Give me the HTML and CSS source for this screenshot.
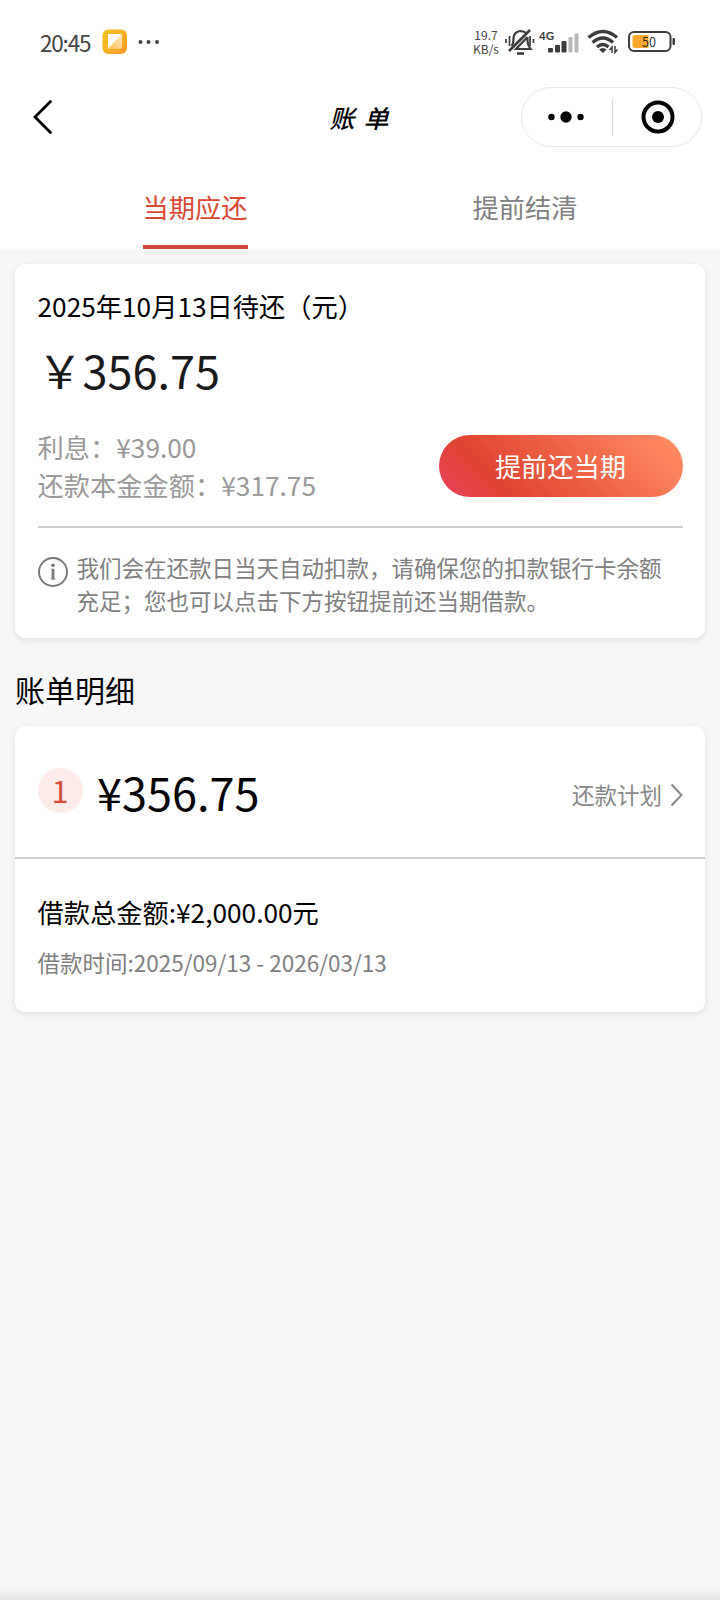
FILE: index.html
```html
<!DOCTYPE html>
<html lang="zh-CN">
  <head>
    <meta charset="utf-8">
    <title>账单</title>
    <link rel="stylesheet" href="styles.css">
  </head>
  <body>
    <div class="status">
      <span class="time">20:45</span>
      <svg class="app" width="26" height="26" viewBox="0 0 26 26">
        <defs>
          <linearGradient id="gold" x1="0" y1="0" x2="1" y2="1">
            <stop offset="0" stop-color="#f3c51c"/>
            <stop offset="1" stop-color="#ff9a2b"/>
          </linearGradient>
          <linearGradient id="fold" x1="1" y1="0" x2="0" y2="1">
            <stop offset="0" stop-color="#fff"/>
            <stop offset="1" stop-color="#ffc45c"/>
          </linearGradient>
        </defs>
        <rect x="0.5" y="0.5" width="24.5" height="24.5" rx="6" fill="url(#gold)"/>
        <path d="M6 5H20L6 20Z" fill="#fff"/>
        <path d="M20 5V17Q20 20 17 20H6Z" fill="url(#fold)" opacity="0.75"/>
      </svg>
      <svg class="more" width="22" height="6" viewBox="0 0 22 6" fill="#444">
        <circle cx="2.5" cy="3" r="2"/>
        <circle cx="10.5" cy="3" r="2"/>
        <circle cx="19" cy="3" r="2"/>
      </svg>
      <div class="speed">19.7<br>KB/s</div>
      <svg class="mute" width="32" height="28" viewBox="0 0 32 28" fill="none" stroke="#3c3c3c" stroke-width="2.2">
        <path d="M2 11V15M5.5 8V18M26 8V18M29.5 11V15" stroke-width="1.7"/>
        <path d="M5 23L26 2" stroke-width="2.6"/>
        <path d="M7.5 18Q9.500 16 9.500 10Q10 4 16 3Q20 3 22 5"/>
        <path d="M23.500 9V13Q23.500 17 26.500 21H12L23.500 9"/>
        <path d="M13 25.500H20" stroke-width="2.6"/>
      </svg>
      <svg class="signal" width="42" height="26" viewBox="0 0 42 26">
        <text class="net" x="0" y="11" textLength="15" lengthAdjust="spacingAndGlyphs">4G</text>
        <g fill="#3c3c3c">
          <rect x="9" y="19" width="5" height="4.500" rx="1"/>
          <rect x="16" y="16" width="5" height="7.500" rx="1"/>
          <rect x="22.500" y="12" width="5" height="11.500" rx="1"/>
        </g>
        <g fill="#b9b9b9">
          <rect x="29.500" y="8" width="4" height="15.500" rx="1"/>
          <rect x="35.500" y="4.500" width="4" height="19" rx="1"/>
        </g>
      </svg>
      <svg class="wifi" width="32" height="26" viewBox="0 0 32 26" fill="none" stroke="#3c3c3c" stroke-width="3.300">
        <path d="M1.500 8.500Q16 -3.500 30 8.500"/>
        <path d="M5.500 13.500Q16 4.500 26 13.500"/>
        <path d="M10 18Q16 13 21.500 18"/>
        <path d="M12 20.500Q16 17.500 19.500 20.500L16 24Z" fill="#3c3c3c" stroke="none"/>
        <path d="M25 24V18L22.500 21M28 17V23.500L30.500 20.500" stroke-width="1.500"/>
      </svg>
      <svg class="battery" width="48" height="22" viewBox="0 0 48 22">
        <rect x="1" y="1" width="41.500" height="19" rx="5" fill="#fff" stroke="#3c3c3c" stroke-width="2"/>
        <path d="M7 4H20.500V17H7Q4.500 17 4.500 14.500V6.500Q4.500 4 7 4Z" fill="#faa92e"/>
        <rect x="44.500" y="7" width="2.500" height="7" rx="1" fill="#3c3c3c"/>
        <text class="level" x="14" y="15.500" textLength="14" lengthAdjust="spacingAndGlyphs">50</text>
      </svg>
    </div>

    <div class="nav">
      <svg class="back" width="20" height="36" viewBox="0 0 20 36">
        <path d="M17.500 2.500L2 18L17.500 33.500" fill="none" stroke="#000" stroke-width="2.800" stroke-linecap="round"/>
      </svg>
      <h1>账单</h1>
      <div class="capsule">
        <svg width="36" height="12" viewBox="0 0 36 12">
          <circle cx="3.500" cy="6" r="3.200"/>
          <circle cx="18" cy="6" r="5.700"/>
          <circle cx="32.500" cy="6" r="3.200"/>
        </svg>
        <i></i>
        <svg width="34" height="34" viewBox="0 0 34 34">
          <circle cx="17" cy="17" r="14.500" fill="none" stroke="#000" stroke-width="4"/>
          <circle cx="17" cy="17" r="6"/>
        </svg>
      </div>
    </div>

    <div class="tabs">
      <div class="tab"><span class="active">当期应还</span></div>
      <div class="tab"><span>提前结清</span></div>
    </div>

    <div class="card due">
      <div class="date">2025年10月13日待还（元）</div>
      <div class="amount">￥356.75</div>
      <div class="row">
        <div class="parts">
          <div>利息：¥39.00</div>
          <div>还款本金金额：¥317.75</div>
        </div>
        <div class="btn">提前还当期</div>
      </div>
      <div class="note">
        <svg width="30" height="30" viewBox="0 0 30 30">
          <circle cx="15" cy="15" r="14" fill="none" stroke="#777" stroke-width="1.900"/>
          <circle cx="15" cy="8.300" r="1.800" fill="#777"/>
          <path d="M12.800 12H15.500V22M12.500 22H18" fill="none" stroke="#777" stroke-width="0.600"/>
          <path d="M15 12V22.500" stroke="#777" stroke-width="2.800"/>
        </svg>
        <p>我们会在还款日当天自动扣款，请确保您的扣款银行卡余额<br>充足；您也可以点击下方按钮提前还当期借款。</p>
      </div>
    </div>

    <h2>账单明细</h2>

    <div class="card bill">
      <div class="head">
        <span class="num">1</span>
        <span class="sum">¥356.75</span>
        <span class="plan">还款计划</span>
        <svg width="13" height="24" viewBox="0 0 13 24">
          <path d="M1.500 1.500L11.500 12L1.500 22.500" fill="none" stroke="#888" stroke-width="2"/>
        </svg>
      </div>
      <div class="info">
        <div class="total">借款总金额:¥2,000.00元</div>
        <div class="period">借款时间:2025/09/13 - 2026/03/13</div>
      </div>
    </div>

    <div class="bottom"></div>
  </body>
</html>
```

FILE: styles.css
```css
* {
  box-sizing: border-box;
}

body {
  margin: 0;
  height: 1600px;
  display: flex;
  flex-direction: column;
  overflow: hidden;
  background: #f7f7f7;
  color: #000;
  font-family: "Noto Sans CJK SC", sans-serif;
  font-size: 26.25px;
  line-height: 38px;
}

svg {
  display: block;
  flex: none;
}

.status {
  height: 84px;
  padding: 0 44px 0 40px;
  display: flex;
  align-items: center;
  background: #fff;
}

.time {
  width: 62px;
  color: #444;
  font-family: "Noto Sans CJK SC", sans-serif;
  font-size: 22.5px;
  letter-spacing: -1.2px;
}

.more {
  margin-left: 10px;
}

.speed {
  width: 26px;
  margin-left: auto;
  color: #444;
  font-family: "Noto Sans CJK SC", sans-serif;
  font-size: 12px;
  line-height: 14px;
  text-align: center;
  white-space: nowrap;
}

.mute {
  margin-left: 5px;
}

.signal {
  margin-left: 3px;
}

.wifi {
  margin-left: 6px;
}

.battery {
  margin-left: 9px;
}

.net {
  fill: #3c3c3c;
  font: bold 11px Lato, sans-serif;
}

.level {
  fill: #333;
  font: 13.5px "Noto Sans CJK SC", sans-serif;
}

.nav {
  height: 66px;
  padding: 0 18px 0 33px;
  display: grid;
  grid-template-columns: 1fr 76px 1fr;
  align-items: center;
  background: #fff;
}

.nav h1 {
  margin: 0;
  font-size: 25px;
  font-style: italic;
  font-weight: 500;
  letter-spacing: 9px;
  white-space: nowrap;
}

.capsule {
  width: 181px;
  height: 60px;
  padding: 0 26px;
  justify-self: end;
  display: flex;
  align-items: center;
  justify-content: space-between;
  border: 1px solid #e6e6e6;
  border-radius: 30px;
}

.capsule i {
  width: 1px;
  height: 37px;
  background: #dcdcdc;
}

.tabs {
  height: 99px;
  padding: 0 30px;
  display: flex;
  background: #fff;
  color: #808080;
}

.tab {
  flex: 1;
  display: flex;
  justify-content: center;
}

.tab span {
  padding-top: 38px;
  border-bottom: 4px solid transparent;
}

.tab .active {
  color: #d84a35;
  border-color: #d14a37;
}

.card {
  margin: 0 15px;
  background: #fff;
  border-radius: 10px;
  box-shadow: 0 2px 6px rgba(0, 0, 0, 0.1);
}

.due {
  height: 374px;
  margin-top: 15px;
  padding: 23px 22.5px 0;
}

.amount {
  margin-top: 12px;
  color: #1a1a1a;
  font-size: 45px;
  line-height: 65px;
}

.row {
  height: 126px;
  padding-bottom: 22px;
  display: flex;
  align-items: flex-end;
  justify-content: space-between;
  border-bottom: 2px solid #ccc;
}

.parts {
  color: #999;
}

.btn {
  width: 244px;
  height: 62px;
  margin-bottom: 7px;
  border-radius: 31px;
  background: linear-gradient(45deg, #e8405a 0%, #e04432 25%, #ff8c62 95%);
  color: #fff;
  line-height: 62px;
  text-align: center;
}

.note {
  padding-top: 23px;
  display: flex;
  gap: 9px;
  color: #808080;
  font-size: 22.5px;
  line-height: 32.5px;
}

.note svg {
  margin-top: 6px;
}

.note p {
  margin: 0;
  white-space: nowrap;
}

h2 {
  margin: 29px 15px 15px;
  font-size: 30px;
  font-weight: 400;
  line-height: 44px;
}

.bill {
  height: 286px;
}

.head {
  height: 133px;
  padding: 0 22px 0 22.5px;
  display: flex;
  align-items: center;
  border-bottom: 2px solid #ccc;
}

.num {
  width: 45px;
  height: 45px;
  margin: 0 14.5px 2px 0;
  border-radius: 50%;
  background: #fdebe9;
  color: #d84a35;
  font-size: 30px;
  line-height: 44px;
  text-align: center;
}

.sum {
  font-size: 45px;
  line-height: 65px;
}

.plan {
  margin: 4px 8px 0 auto;
  color: #888;
  font-size: 22.5px;
}

.head svg {
  margin-top: 6px;
}

.info {
  padding: 34px 22.5px 0;
}

.period {
  margin-top: 12px;
  color: #808080;
  font-size: 22.5px;
}

.bottom {
  height: 12px;
  margin-top: auto;
  background: linear-gradient(#f7f7f7, #e3e3e3);
}
```
